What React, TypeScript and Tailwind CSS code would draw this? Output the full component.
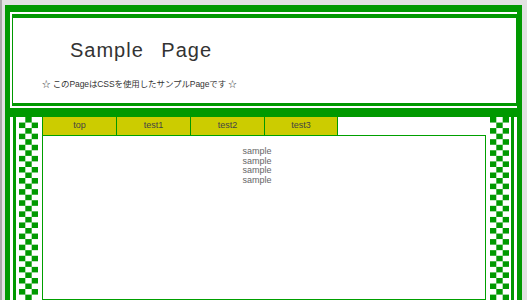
import React from 'react';

const tabs = ['top', 'test1', 'test2', 'test3'];

interface CheckerProps {
  id: string;
  flip?: boolean;
}

// checkered strip down the sides of the body
const Checker: React.FC<CheckerProps> = ({ id, flip }) => {
  const h = 11.1;
  const half = h / 2;
  return (
    <svg width="19" height="100%" className="block shrink-0">
      <defs>
        <pattern id={id} width="19" height={h} patternUnits="userSpaceOnUse">
          {flip ? (
            <>
              <rect x="6.3" y="0" width="6.4" height={half} fill="#009900" />
              <rect x="0" y={half} width="6.3" height={half} fill="#009900" />
              <rect x="12.7" y={half} width="6.3" height={half} fill="#009900" />
            </>
          ) : (
            <>
              <rect x="0" y="0" width="6.3" height={half} fill="#009900" />
              <rect x="12.7" y="0" width="6.3" height={half} fill="#009900" />
              <rect x="6.3" y={half} width="6.4" height={half} fill="#009900" />
            </>
          )}
        </pattern>
      </defs>
      <rect width="19" height="100%" fill={`url(#${id})`} />
    </svg>
  );
};

export default function App() {
  return (
    <div className="w-[527px] h-[300px] overflow-hidden bg-[#e1e1e1] border-l-2 border-[#a9a9a9] pt-[5px] pl-[3px] pr-[5px]">
      <div className="h-full bg-[#009900] pt-[7px] px-[5px] flex flex-col">
        {/* header */}
        <div className="border-t-2 border-l-2 border-b-2 border-white">
          <div className="bg-[#009900] pt-[4px] pl-[1px] pr-[1px] pb-[3px]">
            <div className="bg-white h-[85px] pt-[22px] pl-[57px]">
              <h1 className="text-[20px] leading-[20px] tracking-[1px] [word-spacing:11px] text-[#333] font-['Liberation_Sans',sans-serif]">
                Sample Page
              </h1>
              <p className="mt-[19px] -ml-[28px] text-[8.5px] leading-[10px] tracking-[-0.1px] text-[#333] font-['Liberation_Sans','Noto_Sans_CJK_JP',sans-serif]">
                ☆ このPageはCSSを使用したサンプルPageです ☆
              </p>
            </div>
          </div>
        </div>

        {/* body */}
        <div className="mt-[9px] flex-1 border-l-[3px] border-r-[3px] border-white px-[3px] bg-[#009900]">
          <div className="h-full bg-white flex pl-[3px] pr-[2px]">
            <Checker id="chk-l" flip />
            <div className="w-[444px] ml-[4px] mr-[4px] flex flex-col">
              <div className="flex h-[18px]">
                {tabs.map((t, i) => (
                  <div
                    key={t}
                    className={`w-[74px] flex items-center justify-center bg-[#cccc00] border-l border-[#009900] text-[9px] text-[#444] font-['Liberation_Sans',sans-serif] ${i === tabs.length - 1 ? 'border-r' : ''}`}
                  >
                    {t}
                  </div>
                ))}
              </div>
              <div className="flex-1 border border-[#00a000] pt-[11px] pr-[14px] text-center text-[9px] leading-[9.5px] text-[#666] font-['Liberation_Sans',sans-serif]">
                <div>sample</div>
                <div>sample</div>
                <div>sample</div>
                <div>sample</div>
              </div>
            </div>
            <Checker id="chk-r" />
          </div>
        </div>
      </div>
    </div>
  );
}
